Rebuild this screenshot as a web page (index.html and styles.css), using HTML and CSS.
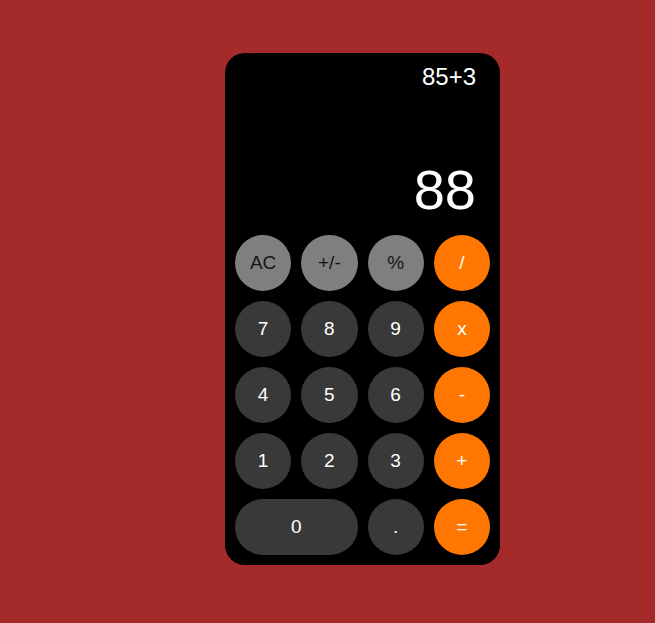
FILE: index.html
```html
<!DOCTYPE html>
<html>
<head>
<meta charset="utf-8">
<link rel="stylesheet" href="styles.css">
</head>
<body>
<div class="calc">
  <div class="display">
    <div class="expr">85+3</div>
    <div class="result">88</div>
  </div>
  <div class="keys">
    <button class="key light">AC</button>
    <button class="key light">+/-</button>
    <button class="key light">%</button>
    <button class="key op">/</button>
    <button class="key">7</button>
    <button class="key">8</button>
    <button class="key">9</button>
    <button class="key op">x</button>
    <button class="key">4</button>
    <button class="key">5</button>
    <button class="key">6</button>
    <button class="key op">-</button>
    <button class="key">1</button>
    <button class="key">2</button>
    <button class="key">3</button>
    <button class="key op">+</button>
    <button class="key zero">0</button>
    <button class="key">.</button>
    <button class="key op">=</button>
  </div>
</div>
</body>
</html>
```
FILE: styles.css
```css
html, body {
  margin: 0;
  background: #a52a2a;
  height: 100%;
}
body {
  padding: 53px 0 0 225px;
  box-sizing: border-box;
  font-family: "Liberation Sans", Arial, sans-serif;
}
.calc {
  width: 275px;
  height: 512px;
  background: #000;
  border-radius: 20px;
  display: flex;
  flex-direction: column;
}
.display {
  height: 172px;
  box-sizing: border-box;
  padding: 10px 24px 3px;
  display: flex;
  flex-direction: column;
  justify-content: space-between;
  align-items: flex-end;
  color: #fff;
}
.expr {
  font-size: 24px;
}
.result {
  font-size: 56px;
}
.keys {
  padding: 10px;
  display: grid;
  grid-template-columns: repeat(4, 1fr);
  grid-auto-rows: 56px;
  gap: 10px;
}
.key {
  border: none;
  border-radius: 28px;
  background: #393939;
  color: #fff;
  font-family: "Liberation Sans", Arial, sans-serif;
  font-size: 19px;
  padding: 0;
}
.key.light {
  background: #7f7f7f;
  color: #151515;
}
.key.op {
  background: #ff7700;
  color: #fff;
}
.key.zero {
  grid-column: span 2;
}
```
